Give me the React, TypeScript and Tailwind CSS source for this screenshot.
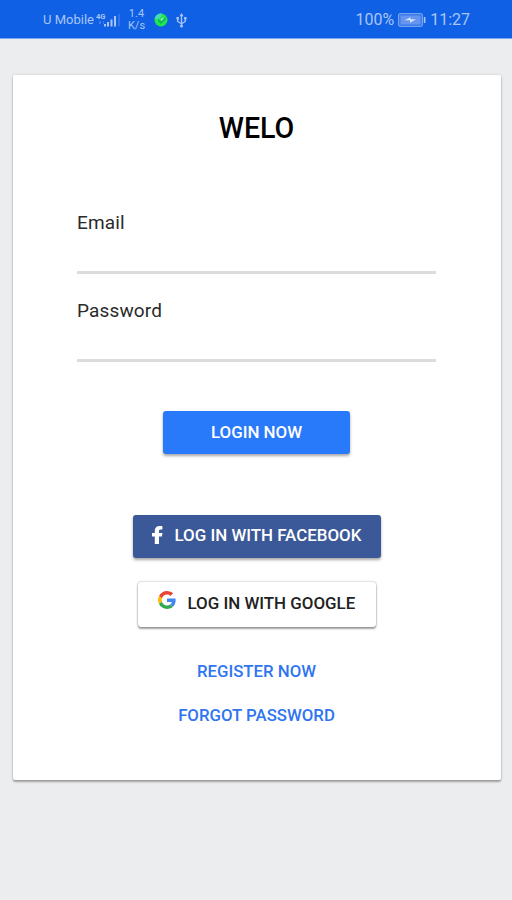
import type { ReactNode } from "react";

type FieldProps = {
  id: string;
  label: string;
  type: string;
};

const Field = ({ id, label, type }: FieldProps) => (
  <div className="flex h-[88px] flex-col">
    <label
      htmlFor={id}
      className="h-6 text-[19px] leading-6 tracking-[0.15px] text-[#2a2a2a]"
    >
      {label}
    </label>
    <input
      id={id}
      type={type}
      className="h-[39px] w-full border-b-[3px] border-[#dcdcdc] bg-transparent outline-none"
    />
  </div>
);

const LinkButton = ({ children }: { children: ReactNode }) => (
  <button className="h-6 text-[16.8px] leading-6 font-medium text-[#2f75f0]">
    {children}
  </button>
);

const FacebookIcon = () => (
  <svg className="-mt-[4px] h-[18px] w-[11px] shrink-0" viewBox="0 0 11 18" fill="white">
    <path d="M2.800 18v-7.500H0V7h2.800V4.700C2.800 1.700 4.600 0 7.600 0c1.500 0 2.800.2 2.800.2v3.200H8.800C7.300 3.400 7 4.200 7 5.200V7h3.500l-.6 3.500H7V18z" />
  </svg>
);

const GoogleIcon = () => (
  <svg className="h-[18px] w-[18px] shrink-0" viewBox="0 0 48 48">
    <path
      fill="#EA4335"
      d="M24 9.5c3.54 0 6.71 1.22 9.21 3.6l6.85-6.85C35.9 2.38 30.47 0 24 0 14.62 0 6.51 5.38 2.56 13.22l7.98 6.19C12.43 13.72 17.74 9.5 24 9.5z"
    />
    <path
      fill="#4285F4"
      d="M46.98 24.55c0-1.57-.15-3.09-.38-4.55H24v9.02h12.94c-.58 2.96-2.26 5.48-4.78 7.18l7.73 6c4.51-4.18 7.09-10.36 7.09-17.65z"
    />
    <path
      fill="#FBBC05"
      d="M10.53 28.59c-.48-1.45-.76-2.99-.76-4.59s.27-3.14.76-4.59l-7.98-6.19C.92 16.46 0 20.12 0 24c0 3.88.92 7.54 2.56 10.78l7.97-6.19z"
    />
    <path
      fill="#34A853"
      d="M24 48c6.48 0 11.93-2.13 15.89-5.81l-7.73-6c-2.15 1.45-4.92 2.3-8.16 2.3-6.26 0-11.57-4.22-13.47-9.91l-7.98 6.19C6.51 42.62 14.62 48 24 48z"
    />
  </svg>
);

const SignalIcon = () => (
  <svg className="h-[16px] w-[26px] shrink-0" viewBox="0 0 26 16" fill="#a9c5f8">
    <text x="0" y="7" fontSize="7.500" fontWeight="700">
      4G
    </text>
    <path d="M3 9h2v3H3zM7 9h1v3H7z" opacity=".3" />
    <path d="M8 12h2v2.500H8zM11 10h2v4.500h-2zM14.500 7.500h2v7h-2zM18 4h2v10.500h-2z" />
    <path d="M22.500 2h1v12.500h-1z" opacity=".4" />
  </svg>
);

const GlobeIcon = () => (
  <svg className="h-[14px] w-[14px] shrink-0" viewBox="0 0 14 14">
    <circle cx="7" cy="7" r="6.500" fill="#20e64c" />
    <path d="M.8 6C1 2.500 4 .3 8 .6L7 4 4 6z" fill="#48d8bb" />
    <path d="M4 6l3 2 4.500-4 .5 2-5 5-3-3z" fill="#0bb863" />
    <path d="M6.500 6.500l4-2.500-3 4z" fill="#b9f7c4" />
  </svg>
);

const UsbIcon = () => (
  <svg
    className="h-[15px] w-[11px] shrink-0"
    viewBox="0 0 11 15"
    fill="none"
    stroke="#a9c5f8"
    strokeWidth="1.300"
  >
    <path d="M5.500 2v11M1.700 5.500v3l3.800 2.300 3.800-2.300v-3" />
    <path d="M5.500 0L3.500 3.300h4z" fill="#a9c5f8" stroke="none" />
    <circle cx="5.500" cy="13" r="1.500" fill="#a9c5f8" stroke="none" />
    <path d="M.5 4h2.400v2.400H.5zM8.100 4h2.400v2.400H8.100z" fill="#a9c5f8" stroke="none" />
  </svg>
);

const BatteryIcon = () => (
  <svg className="h-[14px] w-[28px] shrink-0" viewBox="0 0 28 14">
    <rect x=".6" y=".6" width="23.800" height="12.800" rx="1.200" fill="#3978e9" stroke="#7ea8f2" />
    <rect x="2.500" y="2.500" width="20" height="9" fill="#6595ee" />
    <path d="M6.500 7.300l6-3v2h5.500l-6 3.500V7.300z" fill="#d7e5ff" />
    <path d="M25.800 4h1.600v6h-1.600z" fill="#a9c5f8" />
  </svg>
);

const StatusBar = () => (
  <header className="flex h-[39px] items-center justify-between border-b border-[#7ba7ef] bg-[#0f60e5] pt-[2px] pr-[42px] pl-[43px] text-[#a9c5f8]">
    <div className="flex items-center">
      <span className="w-[53px] text-[13px] whitespace-nowrap">U Mobile</span>
      <SignalIcon />
      <span className="ml-[5px] w-[19px] text-center text-[11px] leading-[12px]">
        1.4
        <br />
        K/s
      </span>
      <span className="ml-[8px] flex items-center gap-[8px]">
        <GlobeIcon />
        <UsbIcon />
      </span>
    </div>
    <div className="flex items-center text-[16px]">
      <span>100%</span>
      <span className="mr-[4px] ml-[4px]">
        <BatteryIcon />
      </span>
      <span>11:27</span>
    </div>
  </header>
);

const App = () => {
  return (
    <div className="flex h-[900px] w-[512px] flex-col bg-[#ecedef] font-['Roboto','Liberation_Sans',sans-serif]">
      <StatusBar />
      <main className="mt-[36px] mr-[11px] ml-[13px] flex h-[705px] flex-col items-center rounded-[2px] bg-white pr-px shadow-[0_2px_2px_rgba(0,0,0,0.3),0_0_3px_rgba(0,0,0,0.15)]">
        <h1 className="mt-[37px] h-8 text-[28.6px] leading-8 font-medium text-black">WELO</h1>

        <form className="mt-[67px] w-[359px]">
          <Field id="email" label="Email" type="email" />
          <Field id="password" label="Password" type="password" />
        </form>

        <button className="mt-[24px] h-[43px] w-[187px] rounded-[3px] bg-[#2979fb] text-[16.9px] font-medium text-white shadow-[0_2px_3px_rgba(0,0,0,0.35)]">
          LOGIN NOW
        </button>

        {/* 소셜 로그인 */}
        <button className="mt-[61px] flex h-[43px] w-[248px] items-center rounded-[3px] bg-[#3b5998] pl-[19px] text-[16.9px] font-medium text-white shadow-[0_2px_3px_rgba(0,0,0,0.35)]">
          <FacebookIcon />
          <span className="-mt-px ml-[12px] whitespace-nowrap">LOG IN WITH FACEBOOK</span>
        </button>
        <button className="mt-[24px] flex h-[45px] w-[238px] items-center rounded-[3px] bg-white pl-[20px] text-[16.9px] font-medium text-[#222222] shadow-[0_2px_2px_rgba(0,0,0,0.35),0_0_2px_rgba(0,0,0,0.4)]">
          <span className="-mt-[9px]">
            <GoogleIcon />
          </span>
          <span className="-mt-px ml-[12px] whitespace-nowrap">LOG IN WITH GOOGLE</span>
        </button>

        <nav className="mt-[32px] flex flex-col items-center gap-[20px]">
          <LinkButton>REGISTER NOW</LinkButton>
          <LinkButton>FORGOT PASSWORD</LinkButton>
        </nav>
      </main>
    </div>
  );
};

export default App;
